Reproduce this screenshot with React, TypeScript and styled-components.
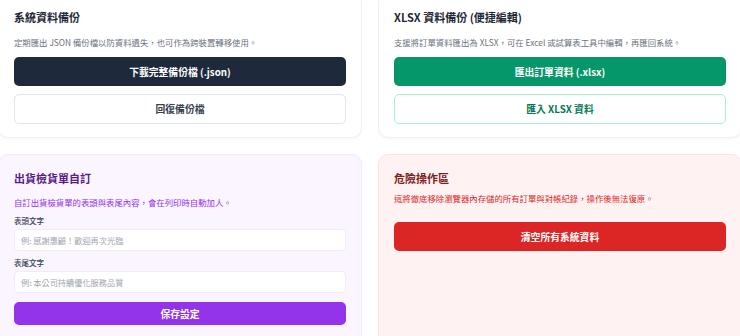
import React from "react";
import styled, { createGlobalStyle } from "styled-components";

const GlobalStyle = createGlobalStyle`
  html, body {
    margin: 0;
    padding: 0;
    background: #ffffff;
    overflow: hidden;
  }
  body {
    font-family: "Noto Sans CJK TC", "Noto Sans", sans-serif;
    -webkit-font-smoothing: antialiased;
  }
  * {
    box-sizing: border-box;
  }
`;

type Tone = "plain" | "purple" | "red";

const cardBg: Record<Tone, string> = {
  plain: "#ffffff",
  purple: "#faf5ff",
  red: "#fef2f2",
};

const cardBorder: Record<Tone, string> = {
  plain: "#eff0f2",
  purple: "#f3e8ff",
  red: "#fee2e2",
};

const titleColor: Record<Tone, string> = {
  plain: "#1f2937",
  purple: "#581c87",
  red: "#7f1d1d",
};

const descColor: Record<Tone, string> = {
  plain: "#6b7280",
  purple: "#9333ea",
  red: "#dc2626",
};

const App = () => {
  return (
    <>
      <GlobalStyle />
      <Page>
        <Card tone="plain">
          <Title tone="plain">系統資料備份</Title>
          <Desc tone="plain" gap={8}>
            定期匯出 JSON 備份檔以防資料遺失，也可作為跨裝置轉移使用。
          </Desc>
          <Actions>
            <SolidButton bg="#1e293b">下載完整備份檔 (.json)</SolidButton>
            <OutlineButton border="#e1e4e8" color="#374151">
              回復備份檔
            </OutlineButton>
          </Actions>
        </Card>

        <Card tone="plain">
          <Title tone="plain">XLSX 資料備份 (便捷編輯)</Title>
          <Desc tone="plain" gap={8}>
            支援將訂單資料匯出為 XLSX，可在 Excel 或試算表工具中編輯，再匯回系統。
          </Desc>
          <Actions>
            <SolidButton bg="#059669">匯出訂單資料 (.xlsx)</SolidButton>
            <OutlineButton border="#a7f3d0" color="#047857">
              匯入 XLSX 資料
            </OutlineButton>
          </Actions>
        </Card>

        <Card tone="purple" tall>
          <Title tone="purple" gap={9}>
            出貨檢貨單自訂
          </Title>
          <Desc tone="purple" gap={6}>
            自訂出貨檢貨單的表頭與表尾內容，會在列印時自動加人。
          </Desc>
          <Field>
            <Label>表頭文字</Label>
            <Input placeholder="例: 感謝惠顧！歡迎再次光臨" />
          </Field>
          <Field>
            <Label>表尾文字</Label>
            <Input placeholder="例: 本公司持續優化服務品質" />
          </Field>
          <SolidButton bg="#9333ea" height={23} style={{ marginTop: 3 }}>
            保存設定
          </SolidButton>
        </Card>

        <Card tone="red" tall>
          <Title tone="red" gap={5}>
            危險操作區
          </Title>
          <Desc tone="red" gap={17}>
            這將徹底移除瀏覽器內存儲的所有訂單與對帳紀錄，操作後無法復原。
          </Desc>
          <SolidButton bg="#dc2626">清空所有系統資料</SolidButton>
        </Card>
      </Page>
    </>
  );
};

export default App;

const Page = styled.div`
  display: grid;
  grid-template-columns: 364px 364px;
  column-gap: 16px;
  row-gap: 16px;
  margin: -7px -2px 0;
`;

const Card = styled.section<{ tone: Tone; tall?: boolean }>`
  display: flex;
  flex-direction: column;
  background: ${({ tone }) => cardBg[tone]};
  border: 1px solid ${({ tone }) => cardBorder[tone]};
  border-radius: 10px;
  padding: 15px 15px 13px;
  box-shadow: 0 1px 2px rgba(15, 23, 42, 0.03);
  min-height: ${({ tall }) => (tall ? "200px" : "auto")};
`;

const Title = styled.h2<{ tone: Tone; gap?: number }>`
  margin: 0 0 ${({ gap }) => gap ?? 10}px;
  font-size: 11px;
  line-height: 16px;
  font-weight: 700;
  color: ${({ tone }) => titleColor[tone]};
`;

const Desc = styled.p<{ tone: Tone; gap: number }>`
  margin: 0 0 ${({ gap }) => gap}px;
  font-size: 8.4px;
  line-height: 14px;
  color: ${({ tone }) => descColor[tone]};
`;

const Actions = styled.div`
  display: flex;
  flex-direction: column;
  gap: 8px;
`;

const SolidButton = styled.button<{ bg: string; height?: number }>`
  display: flex;
  align-items: center;
  justify-content: center;
  width: 100%;
  height: ${({ height }) => height ?? 29}px;
  border: none;
  border-radius: 5px;
  background: ${({ bg }) => bg};
  color: #ffffff;
  font-family: inherit;
  font-size: 9.8px;
  font-weight: 600;
  cursor: pointer;
`;

const OutlineButton = styled.button<{ border: string; color: string }>`
  display: flex;
  align-items: center;
  justify-content: center;
  width: 100%;
  height: 30px;
  border: 1.5px solid ${({ border }) => border};
  border-radius: 5px;
  background: #ffffff;
  color: ${({ color }) => color};
  font-family: inherit;
  font-size: 9.8px;
  font-weight: 600;
  cursor: pointer;
`;

const Field = styled.div`
  display: flex;
  flex-direction: column;
  gap: 2px;
  margin-bottom: 6px;
`;

const Label = styled.label`
  font-size: 7.5px;
  line-height: 12px;
  font-weight: 500;
  color: #374151;
`;

const Input = styled.input`
  height: 22px;
  padding: 0 6px;
  border: 1px solid #f3e8ff;
  border-radius: 4px;
  background: #ffffff;
  font-family: inherit;
  font-size: 8.2px;
  color: #111827;
  outline: none;

  &::placeholder {
    color: #a1a6ae;
  }
`;
